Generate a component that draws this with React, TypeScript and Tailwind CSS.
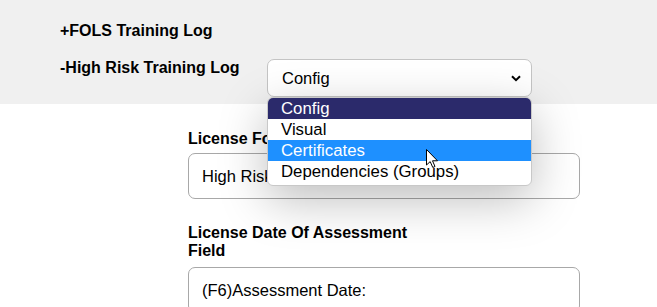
const options = ['Config', 'Visual', 'Certificates', 'Dependencies (Groups)']

function Cursor() {
  return (
    <svg width="13" height="20" viewBox="0 0 13 20" className="absolute left-[426px] top-[149px] z-20">
      <path d="M0.5 0.5 L0.5 16 L4.2 12.6 L6.8 18.5 L9 17.5 L6.5 11.8 L11.5 11.8 Z" fill="#fff" stroke="#000" strokeWidth="1" strokeLinejoin="round" />
    </svg>
  )
}

export default function App() {
  return (
    <div className="relative min-h-[307px] bg-white font-['Liberation_Sans',Arial,sans-serif] text-black overflow-hidden">
      <div className="bg-[#f0f0f0] h-[104px] pl-[60px] pt-[22px]">
        <div className="text-[16px] leading-[18px] font-bold">+FOLS Training Log</div>
        <div className="flex items-start mt-[19px]">
          <div className="w-[207px] text-[16px] leading-[18px] font-bold">-High Risk Training Log</div>
          <div className="relative">
            <div className="w-[265px] h-[38px] bg-white border border-[#c4c4c4] rounded-[7px] flex items-center justify-between pl-[14px] pr-[10px] text-[16.5px]">
              <span>Config</span>
              <svg width="10" height="7" viewBox="0 0 10 7">
                <path d="M1 1.2 L5 5.2 L9 1.2" fill="none" stroke="#000" strokeWidth="2" />
              </svg>
            </div>
            <div className="absolute left-0 top-[38px] z-10 w-[265px] bg-white rounded-[6px] border border-[#c8c8c8] overflow-hidden pb-[3px] shadow-[0_14px_48px_rgba(0,0,0,0.26)]">
              {options.map((o, i) => (
                <div
                  key={o}
                  className={`h-[21px] leading-[21px] pl-[13px] text-[16.8px] ${i === 0 ? 'bg-[#2b2a6b] text-white' : i === 2 ? 'bg-[#1e90ff] text-white' : 'text-black'}`}
                >
                  {o}
                </div>
              ))}
            </div>
          </div>
        </div>
      </div>

      <div className="pl-[188px] pt-[26px] w-[580px]">
        <div className="text-[16px] leading-[18px] font-bold">License Format</div>
        <div className="mt-[5px] h-[46px] border border-[#a8a8a8] rounded-[7px] flex items-center pl-[13px] text-[16.5px]">
          High Risk Work Licence
        </div>
        <div className="mt-[25px] w-[250px] text-[16px] leading-[18px] font-bold">
          License Date Of Assessment Field
        </div>
        <div className="mt-[7px] h-[46px] border border-[#a8a8a8] rounded-[7px] flex items-center pl-[13px] text-[16.5px]">
          (F6)Assessment Date:
        </div>
      </div>

      <Cursor />
    </div>
  )
}
